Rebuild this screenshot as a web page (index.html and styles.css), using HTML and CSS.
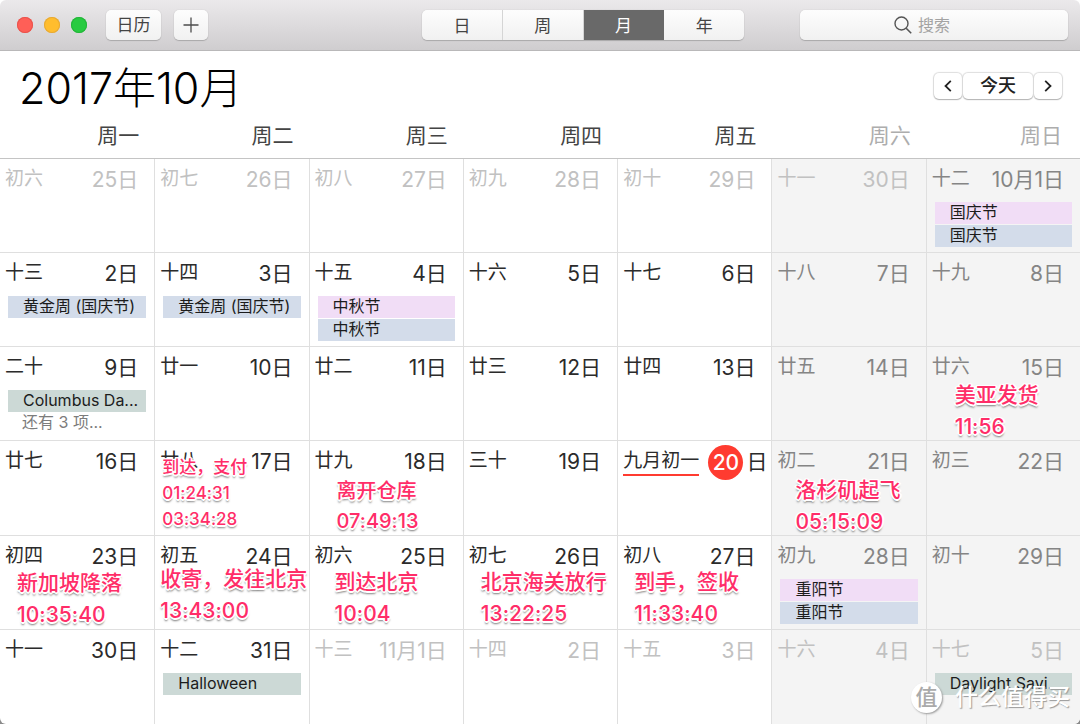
FILE: index.html
```html
<!DOCTYPE html>
<html lang="zh-CN">
<head>
<meta charset="utf-8">
<title>日历</title>
<link rel="stylesheet" href="styles.css">
</head>
<body>
<div class="window">
  <header class="toolbar">
    <div class="toolbar-side">
      <div class="lights"><span class="light close"></span><span class="light minimize"></span><span class="light zoom"></span></div>
      <button class="tool calendars" type="button">日历</button>
      <button class="tool add" type="button" aria-label="新建"><svg width="16" height="16" viewBox="0 0 16 16"><path d="M8 .5v15M.5 8h15" stroke="#4c4c4c" stroke-width="1.3" fill="none"/></svg></button>
    </div>
    <nav class="views">
      <button type="button">日</button><button type="button">周</button><button type="button" class="active" aria-pressed="true">月</button><button type="button">年</button>
    </nav>
    <div class="toolbar-side end">
      <label class="search"><svg width="18" height="18" viewBox="0 0 18 18"><circle cx="7.5" cy="7.5" r="6.5" fill="none" stroke="#555" stroke-width="1.4"/><path d="M12.2 12.2l5 5" stroke="#555" stroke-width="1.6"/></svg><input type="text" placeholder="搜索" aria-label="搜索"></label>
    </div>
  </header>
  <main>
    <div class="heading">
      <h1>2017年10月</h1>
      <div class="pager">
        <button type="button" class="arrow" aria-label="上个月"><svg width="8" height="12" viewBox="0 0 8 12"><path d="M6.8 .8L1.5 6l5.3 5.200" fill="none" stroke="#222" stroke-width="1.8"/></svg></button>
        <button type="button" class="today-button">今天</button>
        <button type="button" class="arrow" aria-label="下个月"><svg width="8" height="12" viewBox="0 0 8 12"><path d="M1.2 .8L6.5 6l-5.3 5.200" fill="none" stroke="#222" stroke-width="1.8"/></svg></button>
      </div>
    </div>
    <table class="month">
      <thead>
        <tr><th>周一</th><th>周二</th><th>周三</th><th>周四</th><th>周五</th><th>周六</th><th>周日</th></tr>
      </thead>
      <tbody>
        <tr>
          <td class="other"><div class="day"><span>初六</span><time>25日</time></div></td>
          <td class="other"><div class="day"><span>初七</span><time>26日</time></div></td>
          <td class="other"><div class="day"><span>初八</span><time>27日</time></div></td>
          <td class="other"><div class="day"><span>初九</span><time>28日</time></div></td>
          <td class="other"><div class="day"><span>初十</span><time>29日</time></div></td>
          <td class="other"><div class="day"><span>十一</span><time>30日</time></div></td>
          <td><div class="day"><span>十二</span><time>10月1日</time></div><div class="event pink">国庆节</div><div class="event blue">国庆节</div></td>
        </tr>
        <tr>
          <td><div class="day"><span>十三</span><time>2日</time></div><div class="event blue">黄金周 (国庆节)</div></td>
          <td><div class="day"><span>十四</span><time>3日</time></div><div class="event blue">黄金周 (国庆节)</div></td>
          <td><div class="day"><span>十五</span><time>4日</time></div><div class="event pink">中秋节</div><div class="event blue">中秋节</div></td>
          <td><div class="day"><span>十六</span><time>5日</time></div></td>
          <td><div class="day"><span>十七</span><time>6日</time></div></td>
          <td><div class="day"><span>十八</span><time>7日</time></div></td>
          <td><div class="day"><span>十九</span><time>8日</time></div></td>
        </tr>
        <tr>
          <td><div class="day"><span>二十</span><time>9日</time></div><div class="event green">Columbus Da...</div><a class="more" href="#">还有 3 项...</a></td>
          <td><div class="day"><span>廿一</span><time>10日</time></div></td>
          <td><div class="day"><span>廿二</span><time>11日</time></div></td>
          <td><div class="day"><span>廿三</span><time>12日</time></div></td>
          <td><div class="day"><span>廿四</span><time>13日</time></div></td>
          <td><div class="day"><span>廿五</span><time>14日</time></div></td>
          <td><div class="day"><span>廿六</span><time>15日</time></div><p class="note shipped">美亚发货<br>11:56</p></td>
        </tr>
        <tr>
          <td><div class="day"><span>廿七</span><time>16日</time></div></td>
          <td><div class="day"><span>廿八</span><time>17日</time></div><p class="note paid">到达，支付<br>01:24:31<br>03:34:28</p></td>
          <td><div class="day"><span>廿九</span><time>18日</time></div><p class="note warehouse">离开仓库<br>07:49:13</p></td>
          <td><div class="day"><span>三十</span><time>19日</time></div></td>
          <td class="today"><div class="day"><span>九月初一</span><time><b>20</b>日</time></div></td>
          <td><div class="day"><span>初二</span><time>21日</time></div><p class="note takeoff">洛杉矶起飞<br>05:15:09</p></td>
          <td><div class="day"><span>初三</span><time>22日</time></div></td>
        </tr>
        <tr>
          <td><div class="day"><span>初四</span><time>23日</time></div><p class="note landing">新加坡降落<br>10:35:40</p></td>
          <td><div class="day"><span>初五</span><time>24日</time></div><p class="note sent">收寄，发往北京<br>13:43:00</p></td>
          <td><div class="day"><span>初六</span><time>25日</time></div><p class="note beijing">到达北京<br>10:04</p></td>
          <td><div class="day"><span>初七</span><time>26日</time></div><p class="note customs">北京海关放行<br>13:22:25</p></td>
          <td><div class="day"><span>初八</span><time>27日</time></div><p class="note received">到手，签收<br>11:33:40</p></td>
          <td><div class="day"><span>初九</span><time>28日</time></div><div class="event pink">重阳节</div><div class="event blue">重阳节</div></td>
          <td><div class="day"><span>初十</span><time>29日</time></div></td>
        </tr>
        <tr>
          <td><div class="day"><span>十一</span><time>30日</time></div></td>
          <td><div class="day"><span>十二</span><time>31日</time></div><div class="event green">Halloween</div></td>
          <td class="other"><div class="day"><span>十三</span><time>11月1日</time></div></td>
          <td class="other"><div class="day"><span>十四</span><time>2日</time></div></td>
          <td class="other"><div class="day"><span>十五</span><time>3日</time></div></td>
          <td class="other"><div class="day"><span>十六</span><time>4日</time></div></td>
          <td class="other"><div class="day"><span>十七</span><time>5日</time></div><div class="event green">Daylight Savi...</div></td>
        </tr>
      </tbody>
    </table>
  </main>
  <div class="watermark"><span class="seal">值</span><span>什么值得买</span></div>
</div>
</body>
</html>
```
FILE: styles.css
```css
* { box-sizing: border-box; }

body {
  margin: 0;
  background: linear-gradient(#fff 50%, #8a8a8a 50%);
  font-family: Inter, "Noto Sans CJK SC", sans-serif;
  font-feature-settings: "calt" 0;
  color: #2b2b2b;
}

button, input { font: inherit; }

.window {
  position: relative;
  min-height: 100vh;
  background: #fff;
  border-radius: 6px;
  overflow: hidden;
}

/* Toolbar */
.toolbar {
  display: grid;
  grid-template-columns: 5fr auto 4fr;
  align-items: center;
  height: 51px;
  padding: 0 12px 0 17px;
  background: linear-gradient(#ebe9eb, #cfcdcf);
  border-bottom: 1px solid #b9b8b9;
}

.toolbar-side { display: flex; align-items: center; gap: 13px; }
.end { justify-content: flex-end; }
.lights { display: flex; gap: 11px; margin-right: 6px; }
.light { width: 16px; height: 16px; border-radius: 50%; }
.close { background: #ff5f57; box-shadow: 0 0 0 1px #e8544d inset; }
.minimize { background: #ffbd2e; box-shadow: 0 0 0 1px #e6a935 inset; }
.zoom { background: #28cb41; box-shadow: 0 0 0 1px #24b43a inset; }

.tool, .views, .search {
  height: 30px;
  border: 0;
  border-radius: 5px;
  background: linear-gradient(#fdfdfd, #f1f1f1);
  box-shadow: 0 1px 1px #a9a8a9, 0 0 1px #b5b4b5;
}
.tool { display: flex; align-items: center; justify-content: center; padding: 0; font-size: 17px; line-height: 30px; color: #444; }
.calendars { width: 55px; }
.add { width: 34px; }

.views { display: flex; width: 322px; }
.views button {
  flex: 1;
  padding: 0;
  border: 0;
  border-right: 1px solid #d5d5d5;
  background: none;
  font-size: 17px;
  line-height: 32px;
  color: #444;
}
.views button:last-child { border-right: 0; }
.views .active { background: #696969; color: #fff; border-color: #696969; }

.search { display: flex; align-items: center; justify-content: center; gap: 6px; width: 268px; }
.search input { width: 68px; padding: 0; border: 0; background: none; outline: 0; font-size: 16px; line-height: 24px; margin-right: -12px; }
.search input::placeholder { color: #a3a3a3; }

/* Month title and paging */
.heading { display: flex; justify-content: space-between; padding: 12px 18px 0 19px; height: 64px; }
h1 { margin: 0; font-size: 43px; line-height: 50px; font-weight: 300; color: #000; }
.pager { display: flex; gap: 1px; padding-top: 10px; }
.pager button {
  height: 26px;
  padding: 0;
  border: 0;
  border-radius: 5px;
  background: #fff;
  box-shadow: 0 1px 1px #b5b5b5, 0 0 1px 1px #dedede;
  font-size: 18px;
  line-height: 26px;
  color: #222;
}
.pager .arrow { width: 28px; display: flex; align-items: center; justify-content: center; }
.pager .today-button { width: 70px; font-weight: 500; }

/* Month grid */
.month { width: 100%; height: calc(100vh - 115px); table-layout: fixed; border-collapse: separate; border-spacing: 0; }
th {
  height: 44px;
  padding: 0 15px 2px 0;
  border-bottom: 1px solid #c4c4c4;
  font-size: 21px;
  line-height: 32px;
  font-weight: 400;
  text-align: right;
  color: #444;
}
th:nth-child(n+6) { color: #adadad; }
th:last-child { padding-right: 18px; }
td {
  position: relative;
  height: 94px;
  padding: 5px 8px 0;
  border-left: 1px solid #dfdfdf;
  border-bottom: 1px solid #dfdfdf;
  vertical-align: top;
}
td:first-child { border-left: 0; }
tr:last-child td { border-bottom: 0; }
td:nth-child(n+6) { background: #f4f4f4; }
td:nth-child(n+6) .day { color: #858585; }
td.other .day, td.other:nth-child(n+6) .day { color: #c1c1c1; }

.day { display: flex; justify-content: space-between; height: 38px; margin: 0 8px 0 -3px; white-space: nowrap; }
.day span { font-size: 19px; line-height: 30px; height: 32px; }
.day time { font-size: 21px; line-height: 32px; }

.today .day { margin-right: -4px; }
.today span { height: 30px; border-bottom: 2px solid #ff3b30; }
.today time { display: flex; gap: 3px; }
.today b {
  width: 35px;
  height: 35px;
  margin-top: -1px;
  border-radius: 50%;
  background: #ff3b30;
  color: #fff;
  font-weight: 500;
  line-height: 35px;
  text-align: center;
}

.event {
  height: 22px;
  margin-bottom: 1px;
  padding-left: 15px;
  font-size: 16px;
  line-height: 21px;
  white-space: nowrap;
  overflow: hidden;
  color: #1c1c1c;
}
.pink { background: #f1ddf6; }
.blue { background: #d3dcea; }
.green { background: #ccd9d6; }
.more { display: block; padding-left: 14px; font-size: 16px; line-height: 18px; color: #7c7c7c; text-decoration: none; }

/* Delivery notes laid over the grid */
.note {
  position: absolute;
  z-index: 1;
  margin: 0;
  font-size: 21px;
  line-height: 32px;
  font-weight: 500;
  white-space: nowrap;
  color: #ff2d68;
  text-shadow: 1px 0 #fff, -1px 0 #fff, 0 1px #fff, 0 -1px #fff, 1px 1px #fff, -1px -1px #fff, 1px -1px #fff, -1px 1px #fff, 2px 0 #fff, -2px 0 #fff, 0 2px #fff, 0 3px 2px #777;
}
.shipped { left: 28px; top: 32px; }
.paid { left: 7px; top: 13px; font-size: 17px; line-height: 26px; }
.warehouse { left: 27px; top: 35px; font-size: 20px; line-height: 30px; }
.takeoff { left: 23px; top: 33px; }
.landing { left: 17px; top: 31px; }
.sent { left: 5px; top: 27px; }
.beijing { left: 25px; top: 30px; }
.customs { left: 17px; top: 30px; }
.received { left: 16px; top: 30px; }

.watermark {
  position: absolute;
  right: 10px;
  bottom: 11px;
  z-index: 2;
  display: flex;
  align-items: center;
  gap: 13px;
  font-size: 23px;
  line-height: 32px;
  font-weight: 500;
  color: #fff;
  text-shadow: 1px 1px 1px #999;
}
.seal {
  width: 31px;
  height: 31px;
  border-radius: 50%;
  background: #fff;
  box-shadow: 1px 1px 2px #999;
  color: #aaa;
  text-shadow: none;
  font-size: 22px;
  line-height: 30px;
  text-align: center;
}
```
